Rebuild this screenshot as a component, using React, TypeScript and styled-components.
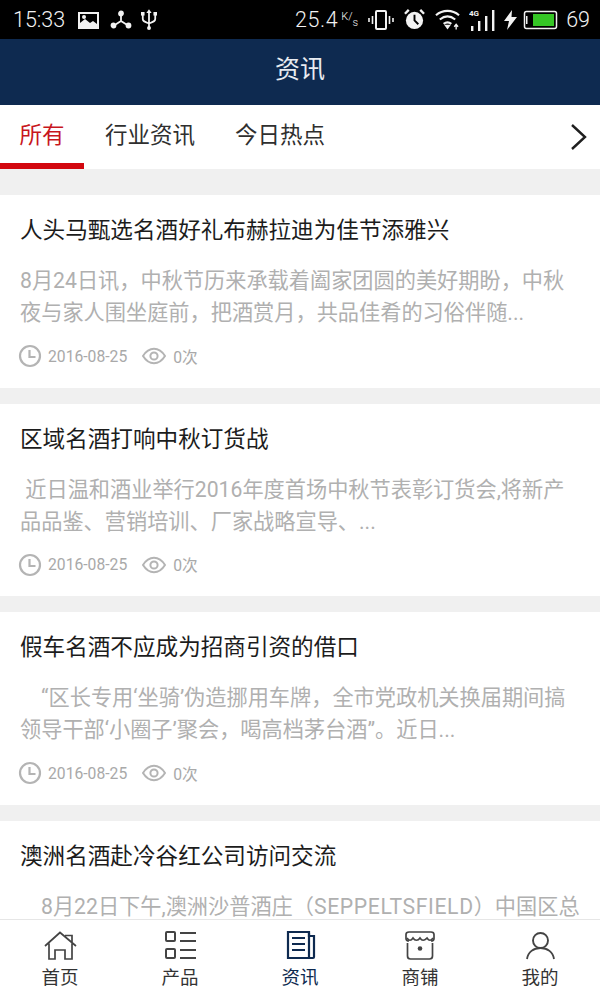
import React from 'react';
import styled, { createGlobalStyle } from 'styled-components';

const NAVY = '#0e2a50';
const CJK = `Roboto, "Noto Sans CJK SC", sans-serif`;

const GlobalStyle = createGlobalStyle`
  html, body {
    margin: 0;
    padding: 0;
    background: #f0f0f0;
    font-family: ${CJK};
  }
`;

const Screen = styled.div`
  width: 600px;
  height: 1000px;
  display: flex;
  flex-direction: column;
  overflow: hidden;
`;

const StatusBar = styled.div`
  height: 39px;
  flex: none;
  background: #000;
  color: #f2f2f2;
  display: flex;
  align-items: center;
  justify-content: space-between;
  padding: 0 10px 0 13px;
  font-size: 21.5px;
  font-family: Roboto, sans-serif;
  font-weight: 300;
`;

const StatusGroup = styled.div`
  display: flex;
  align-items: center;
`;

const Glyph = styled.svg<{ $left?: number }>`
  display: block;
  flex: none;
  margin-left: ${({ $left }) => $left ?? 0}px;
`;

const Rate = styled.span`
  letter-spacing: 0.6px;
`;

const Speed = styled.span`
  display: flex;
  height: 16px;
  margin-left: 3px;
  font-size: 11px;
  line-height: 10px;
`;

const SpeedPart = styled.span<{ $low?: boolean }>`
  align-self: ${({ $low }) => ($low ? 'flex-end' : 'flex-start')};
`;

const BatteryLevel = styled.span`
  margin-left: 8px;
`;

const Header = styled.header`
  height: 66px;
  flex: none;
  box-sizing: border-box;
  padding-bottom: 10px;
  background: ${NAVY};
  color: #e8ebf0;
  display: flex;
  align-items: center;
  justify-content: center;
  font-size: 25px;
`;

const Tabs = styled.nav`
  height: 64px;
  flex: none;
  background: #fff;
  display: flex;
  position: relative;
`;

const Tab = styled.div<{ $active?: boolean; $width: number }>`
  width: ${({ $width }) => $width}px;
  height: 64px;
  box-sizing: border-box;
  padding-bottom: 3px;
  display: flex;
  align-items: center;
  justify-content: center;
  font-size: 22.5px;
  color: ${({ $active }) => ($active ? '#c8161d' : '#2f2f2f')};
  border-bottom: 6px solid ${({ $active }) => ($active ? '#d2080f' : 'transparent')};
`;

const TabArrow = styled.svg`
  position: absolute;
  right: 12px;
  top: 18px;
`;

const Feed = styled.main`
  flex: 1;
  min-height: 0;
  overflow: hidden;
  padding-top: 26px;
  display: flex;
  flex-direction: column;
  gap: 16px;
`;

const Card = styled.article`
  flex: none;
  height: 192.5px;
  background: #fff;
  padding: 20px 20px 0;
  box-sizing: border-box;
`;

const Title = styled.h2`
  margin: 0;
  font-size: 22.6px;
  font-weight: 400;
  line-height: 32px;
  color: #1c1c1c;
  white-space: nowrap;
`;

const Summary = styled.p`
  margin: 18px 0 0;
  font-size: 21.2px;
  line-height: 32px;
  color: #b0b0b0;
  white-space: pre;
  height: 64px;
`;

const WideLatin = styled.span`
  letter-spacing: 0.6px;
`;

const Meta = styled.div`
  margin-top: 15px;
  display: flex;
  align-items: center;
  font-size: 15.7px;
  color: #a9a9a9;
  height: 24px;
  margin-left: -2px;
`;

const MetaText = styled.span<{ $left: number }>`
  margin-left: ${({ $left }) => $left}px;
`;

const BottomNav = styled.footer`
  height: 81px;
  flex: none;
  box-sizing: border-box;
  background: #fff;
  border-top: 1px solid #e6e6e6;
  display: flex;
`;

const NavItem = styled.div<{ $active?: boolean }>`
  flex: 1;
  display: flex;
  flex-direction: column;
  align-items: center;
  padding-top: 10px;
  font-size: 18.5px;
  line-height: 26px;
  color: ${({ $active }) => ($active ? NAVY : '#333')};
`;

const NavIcon = styled.svg`
  display: block;
  width: 34px;
  height: 32px;
  margin-bottom: 3px;
`;

const ClockIcon = () => (
  <Glyph width="24" height="24" viewBox="0 0 24 24" fill="none" stroke="#b4b4b4" strokeWidth="2.2">
    <circle cx="12" cy="12" r="10" />
    <path d="M11.5 6v7h6" />
  </Glyph>
);

const EyeIcon = () => (
  <Glyph $left={15} width="24" height="18" viewBox="0 0 24 18" fill="none" stroke="#b4b4b4" strokeWidth="2">
    <path d="M1 9c3-4.800 6.800-7.200 11-7.200S20 4.200 23 9c-3 4.800-6.800 7.200-11 7.200S4 13.800 1 9z" />
    <circle cx="12" cy="9" r="3.600" />
  </Glyph>
);

const articles = [
  {
    title: '人头马甄选名酒好礼布赫拉迪为佳节添雅兴',
    lines: '8月24日讯，中秋节历来承载着阖家团圆的美好期盼，中秋\n夜与家人围坐庭前，把酒赏月，共品佳肴的习俗伴随...',
  },
  {
    title: '区域名酒打响中秋订货战',
    lines: ' 近日温和酒业举行2016年度首场中秋节表彰订货会,将新产\n品品鉴、营销培训、厂家战略宣导、...',
  },
  {
    title: '假车名酒不应成为招商引资的借口',
    lines: '    “区长专用‘坐骑’伪造挪用车牌，全市党政机关换届期间搞\n领导干部‘小圈子’聚会，喝高档茅台酒”。近日...',
  },
  {
    title: '澳洲名酒赴冷谷红公司访问交流',
    lines: (
      <>
        {'    8月22日下午,澳洲沙普酒庄（'}
        <WideLatin>SEPPELTSFIELD</WideLatin>
        {'）中国区总\n裁'}
      </>
    ),
  },
];

const App: React.FC = () => (
  <Screen>
    <GlobalStyle />
    <StatusBar>
      <StatusGroup>
        <span>15:33</span>
        <Glyph $left={13} width="22" height="18" viewBox="0 0 22 18">
          <path fill="#f2f2f2" fillRule="evenodd" d="M0 1h21v17H0zM2 3v9l5-4 5 4 3-2 4 3V3z" />
          <circle cx="6" cy="6" r="2" fill="#f2f2f2" />
        </Glyph>
        <Glyph $left={10} width="22" height="22" viewBox="0 0 22 22" fill="none" stroke="#f2f2f2" strokeWidth="1.800">
          <path d="M11 4v8M11 12l-7 4.500M11 12l7 4.500" />
          <circle cx="11" cy="4.500" r="2" fill="#f2f2f2" />
          <circle cx="3.500" cy="16.500" r="2" fill="#f2f2f2" />
          <circle cx="18.500" cy="16.500" r="2" fill="#f2f2f2" />
        </Glyph>
        <Glyph $left={9} width="16" height="24" viewBox="0 0 18 24" fill="none" stroke="#f2f2f2" strokeWidth="2">
          <path d="M9 3v18M2 6v5c0 2.500 2 3 7 5 5-2 7-2.500 7-5V6" />
          <path d="M9 0l3 4H6z" fill="#f2f2f2" stroke="none" />
          <circle cx="9" cy="21" r="2.200" fill="#f2f2f2" stroke="none" />
          <rect x="0" y="3" width="4" height="4" fill="#f2f2f2" stroke="none" />
          <rect x="14" y="3" width="4" height="4" fill="#f2f2f2" stroke="none" />
        </Glyph>
      </StatusGroup>
      <StatusGroup>
        <Rate>25.4</Rate>
        <Speed>
          <SpeedPart>K</SpeedPart>
          <SpeedPart>/</SpeedPart>
          <SpeedPart $low>s</SpeedPart>
        </Speed>
        <Glyph $left={10} width="26" height="22" viewBox="0 0 26 22" fill="none" stroke="#f2f2f2" strokeWidth="2">
          <rect x="8" y="2" width="10" height="18" rx="1" />
          <path d="M4.500 7v8M1 9v4M21.500 7v8M25 9v4" strokeWidth="1.600" />
        </Glyph>
        <Glyph $left={10} width="21" height="21" viewBox="0 0 22 22">
          <circle cx="11" cy="12" r="9" fill="#f2f2f2" />
          <path d="M11 6v6l4 4" fill="none" stroke="#000" strokeWidth="2" />
          <path d="M1 5l4-4M21 5l-4-4" stroke="#f2f2f2" strokeWidth="2.500" />
        </Glyph>
        <Glyph $left={10} width="25" height="22" viewBox="0 0 26 22" fill="none" stroke="#f2f2f2" strokeWidth="2.200">
          <path d="M1 6c7-6 17-6 24 0M5 10.500c5-4 11-4 16 0M9 15c2.500-2 5.500-2 8 0" />
          <path d="M9.500 16h7L13 21z" fill="#f2f2f2" stroke="none" />
          <path d="M22 21v-5M20 18l2-2.500 2 2.500" strokeWidth="1.400" />
        </Glyph>
        <Glyph $left={9} width="27" height="24" viewBox="0 0 27 24" fill="#f2f2f2">
          <text x="0" y="8" fontSize="8" fontFamily="Roboto, sans-serif" fontWeight="700">4G</text>
          <rect x="2" y="18" width="2.400" height="5" />
          <rect x="9" y="13" width="2.400" height="10" />
          <rect x="16" y="8" width="2.400" height="15" />
          <rect x="23" y="2" width="2.400" height="21" />
        </Glyph>
        <Glyph $left={8} width="13" height="20" viewBox="0 0 13 20">
          <path fill="#f2f2f2" d="M8 0L0 11h5l-2 9 10-13H7.500z" />
        </Glyph>
        <Glyph $left={6} width="35" height="20" viewBox="0 0 35 20">
          <rect x="1.500" y="1.500" width="32" height="17" rx="2" fill="none" stroke="#f2f2f2" strokeWidth="1.500" />
          <rect x="10" y="4" width="21" height="12" fill="#35c625" />
          <rect x="3" y="6" width="1.500" height="8" fill="#f2f2f2" />
        </Glyph>
        <BatteryLevel>69</BatteryLevel>
      </StatusGroup>
    </StatusBar>
    <Header>资讯</Header>
    <Tabs>
      <Tab $active $width={84}>所有</Tab>
      <Tab $width={132}>行业资讯</Tab>
      <Tab $width={128}>今日热点</Tab>
      <TabArrow width="18" height="28" viewBox="0 0 18 28" fill="none" stroke="#1f1f1f" strokeWidth="2.400">
        <path d="M2 2l13 12L2 26" />
      </TabArrow>
    </Tabs>
    <Feed>
      {articles.map((a) => (
        <Card key={a.title}>
          <Title>{a.title}</Title>
          <Summary>{a.lines}</Summary>
          <Meta>
            <ClockIcon />
            <MetaText $left={6}>2016-08-25</MetaText>
            <EyeIcon />
            <MetaText $left={7}>0次</MetaText>
          </Meta>
        </Card>
      ))}
    </Feed>
    <BottomNav>
      <NavItem>
        <NavIcon viewBox="0 0 34 32" fill="none" stroke="#444" strokeWidth="1.700">
          <path d="M2 16L17 2.500 33 16M22 5.500h7V13M6 13.500V29h6v-9h10v9h7V13.500" />
        </NavIcon>
        首页
      </NavItem>
      <NavItem>
        <NavIcon viewBox="0 0 34 32" fill="none" stroke="#444" strokeWidth="2">
          <rect x="3" y="2" width="9" height="9" rx="1" />
          <rect x="3" y="19" width="9" height="9" rx="1" />
          <path d="M17 3h16M17 11h16M17 20h16M17 28h16" />
        </NavIcon>
        产品
      </NavItem>
      <NavItem $active>
        <NavIcon viewBox="0 0 34 32" fill="none" stroke={NAVY} strokeWidth="2.200">
          <path d="M26 2H5v26h25c.800 0 1-.500 1-1V6h-5z" />
          <path d="M26 3v25M9 8h13M9 14h13M9 20h13" />
        </NavIcon>
        资讯
      </NavItem>
      <NavItem>
        <NavIcon viewBox="0 0 34 32" fill="none" stroke="#444" strokeWidth="1.700">
          <path d="M6 11c-2 0-3-1-3-2.500V4.500C3 3 4 2 6 2h22c2 0 3 1 3 2.500v4c0 1.500-1 2.500-3 2.500" />
          <path d="M4 8c2 3 4 3 6 0 2 3 5 3 7 0 2 3 4 3 7 0 2 3 4 3 6 0" />
          <path d="M4.500 13v13c0 2 1 3 3 3h19c2 0 3-1 3-3V13" />
          <circle cx="17" cy="18.500" r="2.300" fill="#444" stroke="none" />
        </NavIcon>
        商铺
      </NavItem>
      <NavItem>
        <NavIcon viewBox="0 0 34 32" fill="none" stroke="#444" strokeWidth="1.900">
          <circle cx="17.500" cy="10.500" r="7.500" />
          <path d="M4 29c1-7 6.500-11 13.500-11S30 22 31 29" />
        </NavIcon>
        我的
      </NavItem>
    </BottomNav>
  </Screen>
);

export default App;
